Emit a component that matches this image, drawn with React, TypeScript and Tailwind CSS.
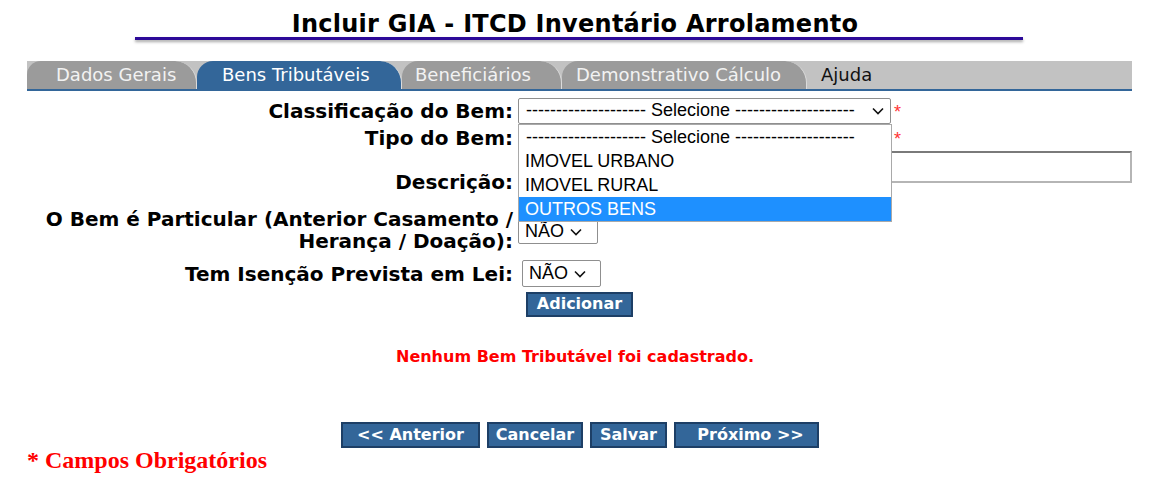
import React from "react";

const labelFont = { fontFamily: '"DejaVu Sans", Verdana, sans-serif' };
const arial = { fontFamily: '"Liberation Sans", Arial, sans-serif' };
const placeholder = "-------------------- Selecione --------------------";

function Chevron({ className = "" }: { className?: string }) {
  return (
    <svg className={className} width="12" height="8" viewBox="0 0 12 8" fill="none">
      <path d="M1 1.5 6 6.5 11 1.5" stroke="#111" strokeWidth="1.6" />
    </svg>
  );
}

function Star({ top }: { top: number }) {
  return (
    <span className="absolute left-[867px] text-[18px] font-normal leading-none text-[#ff3333]" style={{ top, ...arial }}>
      *
    </span>
  );
}

const tabs = [
  { label: "Dados Gerais", w: "w-[170px]", pl: "pl-[29px]", active: false, first: true },
  { label: "Bens Tributáveis", w: "w-[205px]", pl: "pl-[25px]", active: true, first: false },
  { label: "Beneficiários", w: "w-[160px]", pl: "pl-[13px]", active: false, first: false },
  { label: "Demonstrativo Cálculo", w: "w-[245px]", pl: "pl-[14px]", active: false, first: false },
];

export default function App() {
  return (
    <div className="relative h-[488px] w-[1150px] overflow-hidden bg-white text-black" style={labelFont}>
      <h1 className="pt-[10px] text-center text-[24px] font-bold leading-[28px] tracking-[0.25px]">Incluir GIA - ITCD Inventário Arrolamento</h1>
      <div className="ml-[135px] mt-[-1px] h-[3px] w-[888px] bg-[#2d0a99] shadow-[0_2px_3px_rgba(0,0,0,0.35)]" />

      <div className="ml-[27px] mt-[21px] flex h-[30px] w-[1105px] border-b-2 border-[#336699] bg-[#c2c2c2]">
        {tabs.map((t) => (
          <div
            key={t.label}
            className={`${t.w} ${t.pl} flex items-center rounded-tr-[22px] border-r border-[#dcdcdc] text-[18px] leading-none ${t.first ? "rounded-tl-[14px]" : "rounded-tl-[16px]"} ${t.active ? "bg-[#336699] text-white" : "bg-[#9b9b9b] text-[#f2f2f2]"}`}
          >
            {t.label}
          </div>
        ))}
        <div className="flex items-center pl-[14px] text-[18px] leading-none text-[#111]">Ajuda</div>
      </div>

      <div className="relative ml-[27px] mt-[6px] w-[1105px] text-[20px] font-bold">
        <div className="flex h-[27px] items-center">
          <div className="w-[486px] whitespace-nowrap text-right">Classificação do Bem:</div>
          <div className="ml-[5px] flex h-[26px] w-[373px] items-center justify-between rounded-[2px] border border-[#8f8f8f] bg-white pl-[7px] pr-[6px] text-[18px] font-normal" style={arial}>
            <span className="whitespace-nowrap">{placeholder}</span>
            <Chevron />
          </div>
        </div>
        <div className="flex h-[27px] items-center">
          <div className="w-[486px] text-right">Tipo do Bem:</div>
        </div>
        <div className="flex h-[57px] items-start">
          <div className="w-[486px] pt-[16px] text-right">Descrição:</div>
          <div className="ml-[5px] h-[32px] flex-1 border-2 border-[#7a7a7a] border-b-[#b5b5b5] border-r-[#b5b5b5] bg-white" />
        </div>
        <div className="flex h-[50px] items-start">
          <div className="w-[486px] whitespace-nowrap text-right leading-[22px]">
            O Bem é Particular (Anterior Casamento /<br />Herança / Doação):
          </div>
          <div className="ml-[5px] mt-[11px] flex h-[25px] w-[80px] items-center gap-[6px] rounded-[2px] border border-[#8f8f8f] px-[6px] text-[18px] font-normal" style={arial}>
            NÃO <Chevron />
          </div>
        </div>
        <div className="flex h-[31px] items-center">
          <div className="w-[486px] whitespace-nowrap text-right">Tem Isenção Prevista em Lei:</div>
          <div className="ml-[9px] flex h-[27px] w-[79px] items-center gap-[6px] rounded-[2px] border border-[#8f8f8f] px-[6px] text-[18px] font-normal" style={arial}>
            NÃO <Chevron />
          </div>
        </div>
        <div className="flex h-[30px] items-center">
          <button className="ml-[499px] h-[25px] w-[107px] border-2 border-[#1d3f66] bg-[#336699] text-[16px] font-bold leading-none text-white">Adicionar</button>
        </div>

        <div className="absolute left-[491px] top-[27px] z-10 w-[374px] border border-[#a9a9a9] bg-white text-[18px] font-normal leading-[24px]" style={arial}>
          <div className="whitespace-nowrap pl-[7px]">{placeholder}</div>
          <div className="px-[6px]">IMOVEL URBANO</div>
          <div className="px-[6px]">IMOVEL RURAL</div>
          <div className="bg-[#1e90ff] px-[6px] text-white">OUTROS BENS</div>
        </div>
        <Star top={6} />
        <Star top={33} />
      </div>

      <p className="mt-[27px] text-center text-[16px] font-bold leading-[22px] text-[#ff0000]">Nenhum Bem Tributável foi cadastrado.</p>

      <div className="mt-[54px] flex justify-center gap-[7px] pl-[10px] text-[16px] font-bold text-white">
        <button className="h-[26px] w-[139px] border-2 border-[#1d3f66] bg-[#336699] leading-none">&lt;&lt; Anterior</button>
        <button className="h-[26px] w-[96px] border-2 border-[#1d3f66] bg-[#336699] leading-none">Cancelar</button>
        <button className="h-[26px] w-[77px] border-2 border-[#1d3f66] bg-[#336699] leading-none">Salvar</button>
        <button className="h-[26px] w-[145px] border-2 border-[#1d3f66] bg-[#336699] pl-[8px] leading-none">Próximo &gt;&gt;</button>
      </div>

      <p className="ml-[27px] mt-[-2px] text-[24px] font-bold leading-[28px] text-[#ff0000]" style={{ fontFamily: '"Liberation Serif", "Times New Roman", serif' }}>
        * Campos Obrigatórios
      </p>
    </div>
  );
}
